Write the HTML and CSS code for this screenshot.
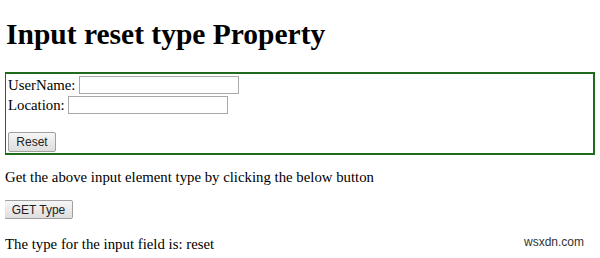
FILE: index.html
```html
<!DOCTYPE html>
<html>
<head>
<meta charset="utf-8">
<link rel="stylesheet" href="styles.css">
</head>
<body>
<h1 class="title">Input reset type Property</h1>
<form class="box">
  <div class="row">UserName:&nbsp;<input class="field f1" type="text"></div>
  <div class="row">Location:&nbsp;<input class="field f2" type="text"></div>
  <div class="spacer"></div>
  <div class="row btnrow"><input class="btn reset" type="reset" value="Reset"></div>
</form>
<p class="txt first">Get the above input element type by clicking the below button</p>
<div class="btnline"><button class="btn get" type="button">GET Type</button></div>
<p class="txt last">The type for the input field is: reset</p>
<div class="mark">wsxdn.com</div>
</body>
</html>
```
FILE: styles.css
```css
html, body { background: #fff; }
body {
  margin: 0 5px;
  font-family: "Liberation Serif", "Times New Roman", serif;
  font-size: 14.8px;
  color: #000;
  position: relative;
  height: 258px;
  overflow: hidden;
}
.title {
  font-size: 29.5px;
  line-height: 32px;
  margin: 18px 0 22px 1px;
  font-weight: bold;
}
.box {
  border: 2px solid #1d6b1d;
  margin: 0 0 0 -1px;
  box-sizing: border-box;
  width: 591px;
  padding: 1px 2px 1px 2px;
}
.row {
  display: flex;
  align-items: center;
  height: 20px;
}
.field {
  border: 1px solid #a9a9a9;
  height: 18px;
  box-sizing: border-box;
  padding: 0 2px;
  margin: 0;
  background: #fff;
}
.f1 { width: 160px; }
.f2 { width: 160px; }
.spacer { height: 16px; }
.btnrow { height: 21px; }
.btn {
  font-family: "Liberation Sans", Arial, sans-serif;
  font-size: 12px;
  color: #222;
  background: linear-gradient(#f6f6f6, #dedede);
  border: 1px solid #a0a0a0;
  border-radius: 2px;
  box-sizing: border-box;
  height: 20px;
  padding: 0 6px;
  margin: 0;
}
.reset { width: 48px; }
.get { width: 69px; height: 19px; }
.txt { margin: 0; line-height: 16px; }
.first { margin-top: 14px; }
.btnline { margin: 15px 0 0 -1px; height: 19px; }
.last { margin-top: 17px; }
.mark {
  position: absolute;
  right: 11px;
  top: 235px;
  font-family: "Liberation Sans", Arial, sans-serif;
  font-size: 12px;
  color: #333;
}
```
